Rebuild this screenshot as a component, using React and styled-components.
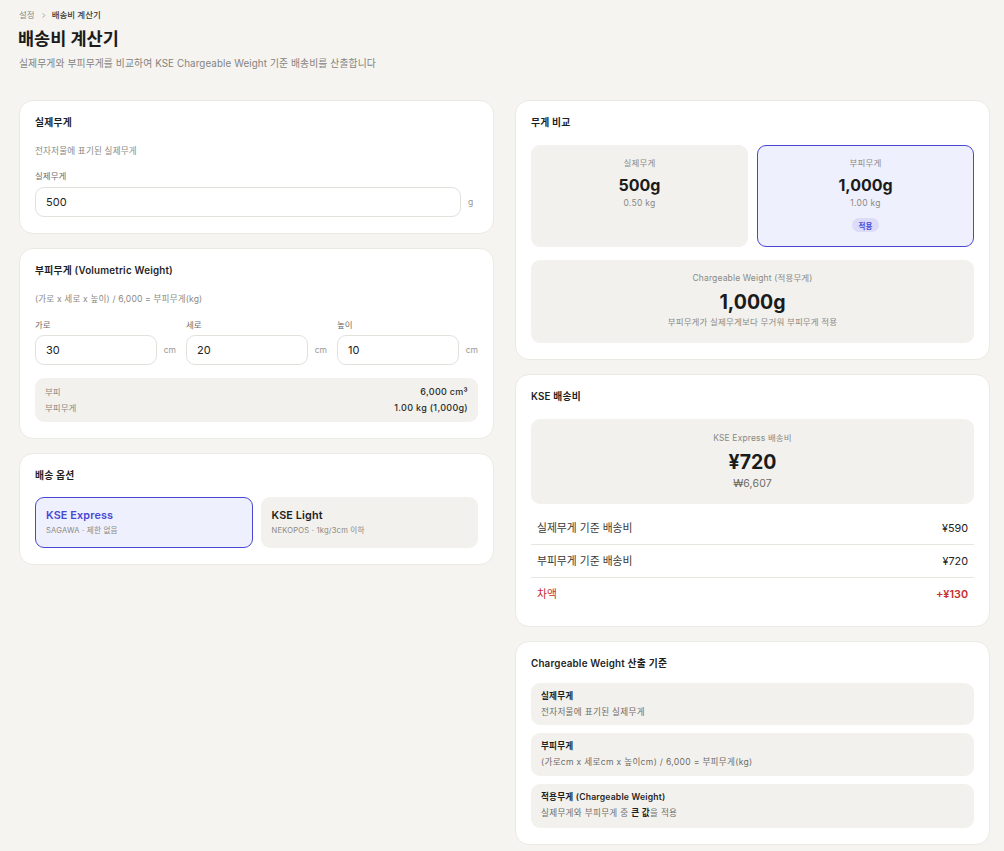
import React from "react";
import styled, { createGlobalStyle, css } from "styled-components";

const Global = createGlobalStyle`
  * { box-sizing: border-box; }
  html, body { margin: 0; padding: 0; background: #f5f4f0; }
  body {
    font-family: "Inter", "Noto Sans CJK KR", sans-serif;
    color: #1f1f1f;
    -webkit-font-smoothing: antialiased;
  }
`;

const Page = styled.div`
  padding: 9px 14px 8px 19px;
`;

const Breadcrumb = styled.div`
  display: flex;
  align-items: center;
  gap: 5px;
  font-size: 8.5px;
  line-height: 13px;
  color: #8d8b86;
  & b { color: #3a3a3a; font-weight: 500; }
`;

const Title = styled.h1`
  margin: 5px 0 0 -1px;
  font-size: 17.5px;
  line-height: 24px;
  font-weight: 700;
  color: #1b1b1b;
`;

const Subtitle = styled.p`
  margin: 6px 0 0;
  font-size: 9.8px;
  line-height: 14px;
  letter-spacing: 0.1px;
  color: #85837e;
`;

const Grid = styled.div`
  margin-top: 29px;
  display: grid;
  grid-template-columns: 1fr 1fr;
  gap: 21px;
  align-items: start;
`;

const Column = styled.div`
  display: flex;
  flex-direction: column;
  gap: 14px;
`;

const Card = styled.section`
  background: #fff;
  border: 1px solid #ebe9e4;
  border-radius: 14px;
  padding: 15px 15px 16px;
`;

const CardTitle = styled.h2`
  margin: 0;
  font-size: 9.8px;
  line-height: 14px;
  font-weight: 600;
  letter-spacing: 0.2px;
  color: #1f1f1f;
`;

const Desc = styled.p`
  margin: 15px 0 0;
  font-size: 8.6px;
  line-height: 13px;
  letter-spacing: 0.15px;
  color: #8b8984;
`;

const FieldLabel = styled.div`
  margin-top: ${(p) => p.$mt ?? 12}px;
  font-size: 8.5px;
  line-height: 13px;
  color: #6f6d68;
`;

const InputRow = styled.div`
  margin-top: ${(p) => p.$mt ?? 3}px;
  display: flex;
  align-items: center;
  gap: 7px;
`;

const Input = styled.div`
  flex: 1;
  height: 30px;
  border: 1px solid #e3e1dc;
  border-radius: 9px;
  background: #fff;
  padding: 0 10px;
  display: flex;
  align-items: center;
  font-size: 11px;
  color: #222;
`;

const Unit = styled.span`
  font-size: 8.5px;
  color: #9a9893;
  width: ${(p) => p.$w || "auto"};
`;

const DimGrid = styled.div`
  margin-top: 13px;
  display: grid;
  grid-template-columns: repeat(3, 1fr);
  gap: 10px;
`;

const DimCol = styled.div`
  display: flex;
  flex-direction: column;
  & > ${FieldLabel} { margin-top: 0; }
`;

const SummaryBox = styled.div`
  margin-top: 13px;
  background: #f2f1ed;
  border-radius: 9px;
  padding: 6px 10px;
`;

const SummaryRow = styled.div`
  display: flex;
  justify-content: space-between;
  font-size: 8.5px;
  line-height: 16px;
  color: #8b8984;
  & b { font-weight: 500; color: #2a2a2a; font-size: 9px; letter-spacing: 0.3px; }
`;

const Options = styled.div`
  margin-top: 14px;
  display: grid;
  grid-template-columns: 1fr 1fr;
  gap: 8px;
`;

const Option = styled.div`
  height: 51px;
  border-radius: 9px;
  padding: 10px 10px;
  border: 1px solid transparent;
  background: #f2f1ed;
  ${(p) =>
    p.$active &&
    css`
      border-color: #4a47d6;
      background: #eef0fd;
    `}
`;

const OptionTitle = styled.div`
  font-size: 10.8px;
  line-height: 15px;
  font-weight: 600;
  letter-spacing: 0.15px;
  color: ${(p) => (p.$active ? "#4a47d6" : "#1f1f1f")};
`;

const OptionSub = styled.div`
  margin-top: 2px;
  font-size: 7.6px;
  line-height: 11px;
  letter-spacing: 0.2px;
  color: #8b8984;
`;

const CompareGrid = styled.div`
  margin-top: 15px;
  display: grid;
  grid-template-columns: 1fr 1fr;
  gap: 9px;
`;

const WeightBox = styled.div`
  border-radius: 9px;
  border: 1px solid transparent;
  background: #f2f1ed;
  padding: 11px 10px 14px;
  display: flex;
  flex-direction: column;
  align-items: center;
  text-align: center;
  ${(p) =>
    p.$active &&
    css`
      border-color: #4a47d6;
      background: #eef0fd;
    `}
`;

const SmallLabel = styled.div`
  font-size: 8.5px;
  line-height: 13px;
  letter-spacing: 0.15px;
  color: #8b8984;
`;

const WeightValue = styled.div`
  margin-top: 5px;
  font-size: 16px;
  line-height: 20px;
  font-weight: 700;
  color: #1b1b1b;
`;

const WeightSub = styled.div`
  margin-top: 2px;
  font-size: 8.5px;
  line-height: 12px;
  letter-spacing: 0.3px;
  color: #8b8984;
`;

const Badge = styled.span`
  margin-top: 9px;
  height: 14px;
  padding: 0 7px;
  border-radius: 7px;
  background: #dcdcf9;
  color: #4a47d6;
  font-size: 7.5px;
  font-weight: 600;
  display: inline-flex;
  align-items: center;
`;

const HighlightBox = styled.div`
  margin-top: ${(p) => p.$mt ?? 14}px;
  background: #f2f1ed;
  border-radius: 9px;
  padding: ${(p) => p.$pad || "10px 10px 13px"};
  display: flex;
  flex-direction: column;
  align-items: center;
  text-align: center;
`;

const BigValue = styled.div`
  margin-top: 5px;
  font-size: 19.5px;
  line-height: 24px;
  font-weight: 700;
  color: #1b1b1b;
`;

const Note = styled.div`
  margin-top: ${(p) => p.$mt ?? 2}px;
  font-size: ${(p) => p.$fs || 8.5}px;
  line-height: ${(p) => p.$lh || 13}px;
  letter-spacing: 0.15px;
  color: ${(p) => p.$c || "#8b8984"};
`;

const Rows = styled.div`
  margin-top: 8px;
`;

const PriceRow = styled.div`
  display: flex;
  justify-content: space-between;
  padding: 9px 6px 7px;
  line-height: 16px;
  font-size: 10.8px;
  color: ${(p) => (p.$red ? "#c62f2f" : "#3b3a37")};
  border-bottom: ${(p) => (p.$last ? "none" : "1px solid #e8e6e1")};
  & b { font-weight: ${(p) => (p.$red ? 600 : 400)}; color: ${(p) => (p.$red ? "#c62f2f" : "#222")}; }
`;

const RuleList = styled.div`
  margin-top: 12px;
  display: flex;
  flex-direction: column;
  gap: 8px;
`;

const Rule = styled.div`
  background: #f2f1ed;
  border-radius: 9px;
  padding: 6px 10px 5px;
  min-height: ${(p) => p.$h || 42}px;
`;

const RuleTitle = styled.div`
  font-size: 8.6px;
  line-height: 14px;
  font-weight: 600;
  letter-spacing: 0.2px;
  color: #1f1f1f;
`;

const RuleDesc = styled.div`
  margin-top: 2px;
  font-size: 8.6px;
  line-height: 14px;
  letter-spacing: 0.3px;
  color: #6f6d68;
  & b { color: #1f1f1f; font-weight: 700; }
`;

export default function App() {
  return (
    <>
      <Global />
      <Page>
        <Breadcrumb>
          <span>설정</span>
          <svg width="7" height="7" viewBox="0 0 8 8" fill="none">
            <path d="M3 1.5 5.5 4 3 6.5" stroke="#9a9893" strokeWidth="1" />
          </svg>
          <b>배송비 계산기</b>
        </Breadcrumb>
        <Title>배송비 계산기</Title>
        <Subtitle>실제무게와 부피무게를 비교하여 KSE Chargeable Weight 기준 배송비를 산출합니다</Subtitle>

        <Grid>
          <Column>
            <Card>
              <CardTitle>실제무게</CardTitle>
              <Desc>전자저울에 표기된 실제무게</Desc>
              <FieldLabel>실제무게</FieldLabel>
              <InputRow $mt={4}>
                <Input>500</Input>
                <Unit $w="10px">g</Unit>
              </InputRow>
            </Card>

            <Card>
              <CardTitle>부피무게 (Volumetric Weight)</CardTitle>
              <Desc>(가로 x 세로 x 높이) / 6,000 = 부피무게(kg)</Desc>
              <DimGrid>
                {[
                  ["가로", "30"],
                  ["세로", "20"],
                  ["높이", "10"],
                ].map(([l, v]) => (
                  <DimCol key={l}>
                    <FieldLabel>{l}</FieldLabel>
                    <InputRow>
                      <Input>{v}</Input>
                      <Unit>cm</Unit>
                    </InputRow>
                  </DimCol>
                ))}
              </DimGrid>
              <SummaryBox>
                <SummaryRow>
                  <span>부피</span>
                  <b>6,000 cm³</b>
                </SummaryRow>
                <SummaryRow>
                  <span>부피무게</span>
                  <b>1.00 kg (1,000g)</b>
                </SummaryRow>
              </SummaryBox>
            </Card>

            <Card>
              <CardTitle>배송 옵션</CardTitle>
              <Options>
                <Option $active>
                  <OptionTitle $active>KSE Express</OptionTitle>
                  <OptionSub>SAGAWA · 제한 없음</OptionSub>
                </Option>
                <Option>
                  <OptionTitle>KSE Light</OptionTitle>
                  <OptionSub>NEKOPOS · 1kg/3cm 이하</OptionSub>
                </Option>
              </Options>
            </Card>
          </Column>

          <Column>
            <Card>
              <CardTitle>무게 비교</CardTitle>
              <CompareGrid>
                <WeightBox>
                  <SmallLabel>실제무게</SmallLabel>
                  <WeightValue>500g</WeightValue>
                  <WeightSub>0.50 kg</WeightSub>
                </WeightBox>
                <WeightBox $active>
                  <SmallLabel>부피무게</SmallLabel>
                  <WeightValue>1,000g</WeightValue>
                  <WeightSub>1.00 kg</WeightSub>
                  <Badge>적용</Badge>
                </WeightBox>
              </CompareGrid>
              <HighlightBox $mt={13} $pad="12px 10px 14px">
                <SmallLabel>Chargeable Weight (적용무게)</SmallLabel>
                <BigValue>1,000g</BigValue>
                <Note $mt={2}>부피무게가 실제무게보다 무거워 부피무게 적용</Note>
              </HighlightBox>
            </Card>

            <Card>
              <CardTitle>KSE 배송비</CardTitle>
              <HighlightBox $mt={15} $pad="13px 10px 13px">
                <SmallLabel>KSE Express 배송비</SmallLabel>
                <BigValue>¥720</BigValue>
                <Note $mt={3} $fs={10.5} $lh={14} $c="#6f6d68">₩6,607</Note>
              </HighlightBox>
              <Rows>
                <PriceRow>
                  <span>실제무게 기준 배송비</span>
                  <b>¥590</b>
                </PriceRow>
                <PriceRow>
                  <span>부피무게 기준 배송비</span>
                  <b>¥720</b>
                </PriceRow>
                <PriceRow $red $last>
                  <span>차액</span>
                  <b>+¥130</b>
                </PriceRow>
              </Rows>
            </Card>

            <Card>
              <CardTitle>Chargeable Weight 산출 기준</CardTitle>
              <RuleList>
                <Rule $h={42}>
                  <RuleTitle>실제무게</RuleTitle>
                  <RuleDesc>전자저울에 표기된 실제무게</RuleDesc>
                </Rule>
                <Rule $h={43}>
                  <RuleTitle>부피무게</RuleTitle>
                  <RuleDesc>(가로cm x 세로cm x 높이cm) / 6,000 = 부피무게(kg)</RuleDesc>
                </Rule>
                <Rule $h={44}>
                  <RuleTitle>적용무게 (Chargeable Weight)</RuleTitle>
                  <RuleDesc>
                    실제무게와 부피무게 중 <b>큰 값</b>을 적용
                  </RuleDesc>
                </Rule>
              </RuleList>
            </Card>
          </Column>
        </Grid>
      </Page>
    </>
  );
}
